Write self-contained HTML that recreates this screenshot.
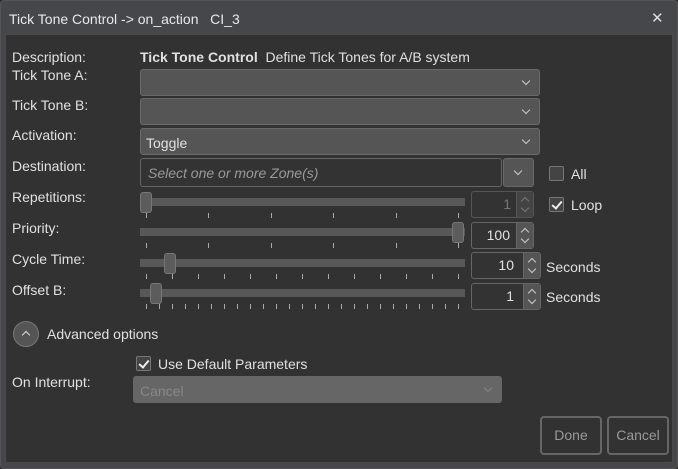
<!DOCTYPE html>
<html><head><meta charset="utf-8"><style>
*{box-sizing:border-box;margin:0;padding:0}
body{width:678px;height:469px;background:#2b2b2b;font-family:"Liberation Sans",sans-serif;font-size:14px;color:#e0e0e0;position:relative;overflow:hidden}
.win{position:absolute;left:0;top:0;width:678px;height:469px;background:#46474a;border:1px solid #555;border-radius:4px}
.panel{position:absolute;left:5px;top:34px;width:668px;height:429px;background:#323232;border:1px solid #4a4a4a;border-radius:2px}
.a{position:absolute;white-space:nowrap}
.combo{position:absolute;background:#555;border:1px solid #6a6a6a;border-radius:3px}
.chev{position:absolute;width:6px;height:6px;border-right:1.5px solid #ccc;border-bottom:1.5px solid #ccc;transform:rotate(45deg)}
.track{position:absolute;left:140px;width:325px;height:8px;background:#585858}
.handle{position:absolute;width:12px;height:21px;background:#5c5c5c;border:1px solid #777;border-radius:3px}
.tick{position:absolute;width:1px;height:5px;background:#aaa}
.spin{position:absolute;height:27px;border:1px solid #666;border-radius:3px;background:#333;text-align:right;line-height:25px;font-size:14px}
.sb{position:absolute;right:0;top:0;width:17px;height:100%;background:#555;border-left:1px solid #666}
.up,.dn{position:absolute;left:5px;width:6px;height:6px;border-left:1.5px solid #ccc;border-top:1.5px solid #ccc}
.up{top:6px;transform:rotate(45deg)}.dn{top:13px;transform:rotate(225deg)}
.cb{position:absolute;width:15px;height:15px;border:1px solid #777;background:#444;border-radius:2px}
.cb.on::after{content:"";position:absolute;left:4px;top:1px;width:4px;height:8px;border-right:2px solid #eee;border-bottom:2px solid #eee;transform:rotate(40deg)}
.btn{position:absolute;height:39px;border:2px solid #666;border-radius:4px;color:#999;text-align:center;line-height:35px;font-size:14px}
</style></head><body>
<div class="win"></div>
<div class="a" style="left:9px;top:11px;font-size:14px;color:#e8e8e8">Tick Tone Control -&gt; on_action&nbsp;&nbsp;&nbsp;CI_3</div>
<div class="a" style="left:651px;top:9px;font-size:15px;color:#ddd">✕</div>
<div class="panel"></div>
<div class="a" style="left:12px;top:49px">Description:</div>
<div class="a" style="left:140px;top:49px"><b>Tick Tone Control</b>&nbsp; Define Tick Tones for A/B system</div>
<div class="a" style="left:12px;top:67px">Tick Tone A:</div>
<div class="a" style="left:12px;top:97px">Tick Tone B:</div>
<div class="a" style="left:12px;top:127px">Activation:</div>
<div class="a" style="left:12px;top:158px">Destination:</div>
<div class="a" style="left:12px;top:189px">Repetitions:</div>
<div class="a" style="left:12px;top:220px">Priority:</div>
<div class="a" style="left:12px;top:251px">Cycle Time:</div>
<div class="a" style="left:12px;top:282px">Offset B:</div>

<div class="combo" style="left:140px;top:69px;width:400px;height:27px"><div class="chev" style="right:10px;top:8px"></div></div>
<div class="combo" style="left:140px;top:98px;width:400px;height:27px"><div class="chev" style="right:10px;top:8px"></div></div>
<div class="combo" style="left:140px;top:128px;width:400px;height:27px"><div class="chev" style="right:10px;top:8px"></div><div class="a" style="left:5px;top:6px;font-size:14px">Toggle</div></div>
<div class="combo" style="left:140px;top:158px;width:362px;height:29px;background:#333;border-color:#666"><div class="a" style="left:7px;top:6px;font-style:italic;color:#999;font-size:14px">Select one or more Zone(s)</div></div>
<div class="combo" style="left:503px;top:158px;width:31px;height:29px"><div class="chev" style="left:11px;top:9px"></div></div>
<div class="cb" style="left:549px;top:166px"></div><div class="a" style="left:571px;top:166px;font-size:14px">All</div>
<div class="cb on" style="left:549px;top:197px"></div><div class="a" style="left:571px;top:197px;font-size:14px">Loop</div>

<div class="track" style="top:198px"></div><div class="handle" style="left:140px;top:192px"></div>
<div class="track" style="top:228px"></div><div class="handle" style="left:452px;top:222px"></div>
<div class="track" style="top:259px"></div><div class="handle" style="left:164px;top:253px"></div>
<div class="track" style="top:289px"></div><div class="handle" style="left:150px;top:283px"></div>
<div id="ticks"></div>

<div class="spin" style="left:471px;top:191px;width:63px;color:#777;padding-right:22px;border-color:#555">1<div class="sb" style="background:#444;border-color:#555"><div class="up" style="border-color:#777"></div><div class="dn" style="border-color:#777"></div></div></div>
<div class="spin" style="left:471px;top:222px;width:63px;padding-right:23px">100<div class="sb"><div class="up"></div><div class="dn"></div></div></div>
<div class="spin" style="left:471px;top:252px;width:70px;padding-right:26px">10<div class="sb"><div class="up"></div><div class="dn"></div></div></div>
<div class="spin" style="left:471px;top:283px;width:70px;padding-right:26px">1<div class="sb"><div class="up"></div><div class="dn"></div></div></div>
<div class="a" style="left:546px;top:259px;font-size:14px">Seconds</div>
<div class="a" style="left:546px;top:289px;font-size:14px">Seconds</div>

<div class="a" style="left:13px;top:321px;width:26px;height:26px;border-radius:50%;background:#555;border:1px solid #777"><div style="position:absolute;left:9px;top:10px;width:6px;height:6px;border-left:1.5px solid #ddd;border-top:1.5px solid #ddd;transform:rotate(45deg)"></div></div>
<div class="a" style="left:47px;top:326px;font-size:14px">Advanced options</div>
<div class="cb on" style="left:136px;top:356px"></div><div class="a" style="left:158px;top:356px;font-size:14px">Use Default Parameters</div>
<div class="a" style="left:12px;top:374px">On Interrupt:</div>
<div class="combo" style="left:133px;top:376px;width:369px;height:27px;background:#666;border-color:#666"><div class="a" style="left:6px;top:6px;color:#888">Cancel</div><div class="chev" style="right:10px;top:8px;border-color:#888"></div></div>
<div class="btn" style="left:540px;top:416px;width:62px">Done</div>
<div class="btn" style="left:607px;top:416px;width:62px">Cancel</div>
<script>
var t=document.getElementById('ticks'),h='';
function row(y,n){for(var i=0;i<n;i++){var x=146+Math.round(i*(312/(n-1)));h+='<div class="tick" style="left:'+x+'px;top:'+y+'px"></div>';}}
row(213,6);row(243,6);row(274,13);row(304,25);
t.innerHTML=h;
</script>
</body></html>
